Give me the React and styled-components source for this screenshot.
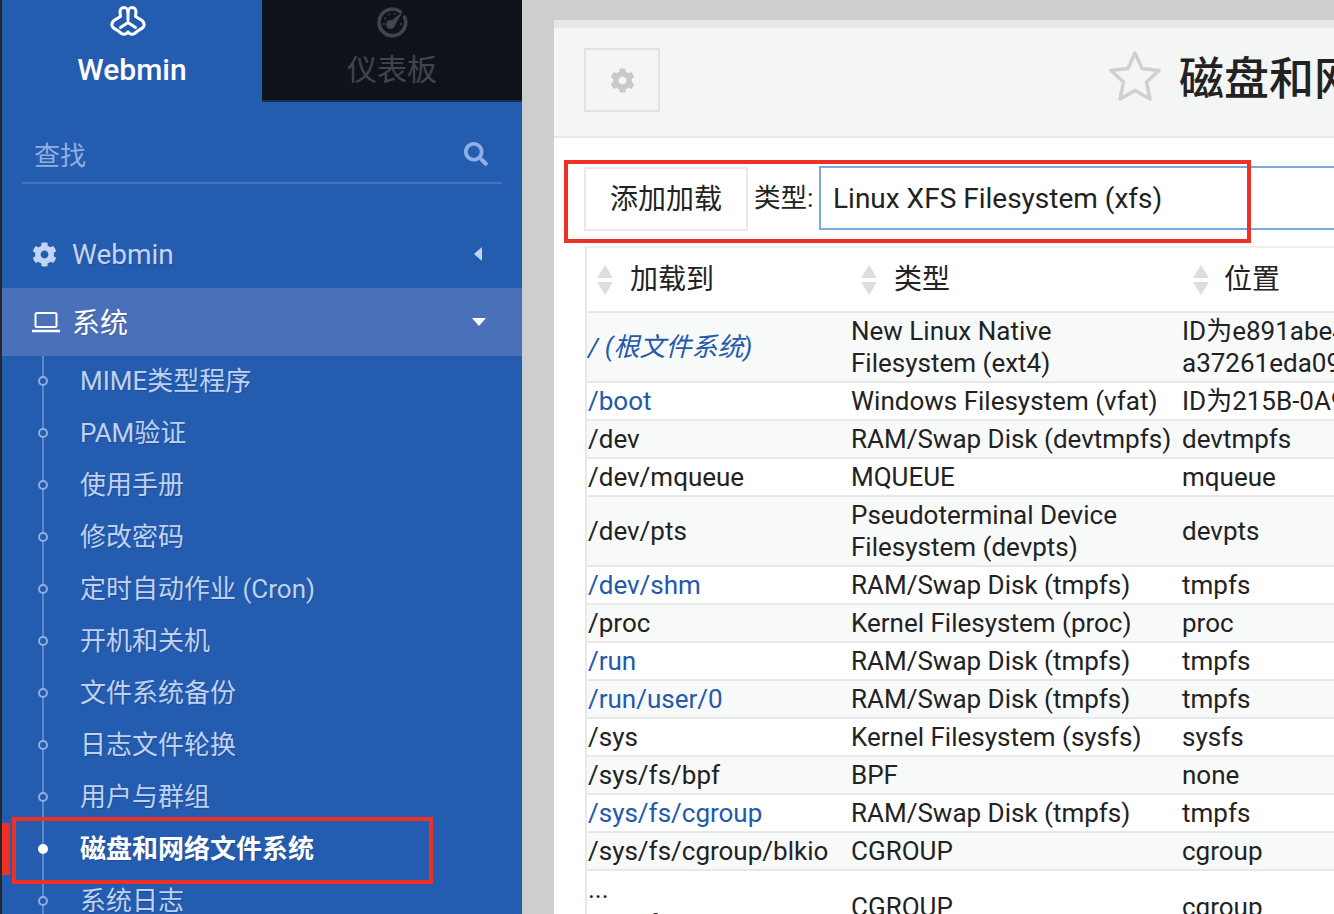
import React from "react";
import styled, { createGlobalStyle } from "styled-components";
import { FaCog, FaSearch } from "react-icons/fa";

const FONT = `Roboto, "Noto Sans CJK SC", sans-serif`;

const Global = createGlobalStyle`
  html, body { margin: 0; padding: 0; height: 100%; overflow: hidden; background: #cdcfcf; }
  #root { height: 100%; }
  * { box-sizing: border-box; }
`;

const Page = styled.div`
  display: flex;
  width: 1334px;
  height: 914px;
  overflow: hidden;
  font-family: ${FONT};
  color: #222;
`;

/* ---------- sidebar ---------- */
const Sidebar = styled.aside`
  flex: 0 0 522px;
  height: 100%;
  background: #245cb0;
  border-left: 2px solid #26282c;
  overflow: hidden;
`;
const Tabs = styled.div`
  display: flex;
  height: 102px;
`;
const BrandTab = styled.div`
  flex: 0 0 260px;
  display: flex;
  flex-direction: column;
  align-items: center;
  padding-top: 5px;
  color: #fff;
  font-size: 30px;
  font-weight: 500;
  line-height: 36px;
  svg { margin: 0 8px 14px 0; }
`;
const DashTab = styled.div`
  flex: 1;
  display: flex;
  flex-direction: column;
  align-items: center;
  padding-top: 6px;
  background: #0e131b;
  border-bottom: 2px solid #1b2f52;
  color: #40444b;
  font-size: 30px;
  line-height: 38px;
  svg { margin-bottom: 13px; }
`;
const Search = styled.div`
  display: flex;
  align-items: center;
  justify-content: space-between;
  height: 56px;
  margin: 26px 20px 0;
  padding: 0 14px 4px 12px;
  border-bottom: 2px solid #4473bb;
  color: #8fafe0;
  font-size: 26px;
  svg { margin-top: 1px; }
`;
const Nav = styled.nav`
  margin-top: 36px;
`;
const NavRow = styled.div`
  display: flex;
  align-items: center;
  height: 68px;
  padding: 0 36px 0 30px;
  font-size: 28px;
  color: ${(p) => (p.$open ? "#fff" : "#c3d4f5")};
  background: ${(p) => (p.$open ? "#4a70ba" : "transparent")};
  text-shadow: 1px 1px 1px rgba(0, 0, 0, 0.15);
`;
const NavIcon = styled.span`
  display: flex;
  width: 41px;
  margin-right: -1px;
  flex: none;
`;
const NavLabel = styled.span`
  flex: 1;
  margin-top: ${(p) => (p.$open ? "-2px" : "0")};
`;
const CaretLeft = styled.span`
  width: 0;
  height: 0;
  margin-right: 4px;
  border-top: 7px solid transparent;
  border-bottom: 7px solid transparent;
  border-right: 8px solid #c3d4f5;
`;
const CaretDown = styled.span`
  width: 0;
  height: 0;
  border-left: 7px solid transparent;
  border-right: 7px solid transparent;
  border-top: 8px solid #fff;
`;
const SubList = styled.ul`
  position: relative;
  list-style: none;
  margin: -1px 0 0;
  padding: 0;
  &::before {
    content: "";
    position: absolute;
    left: 40px;
    top: 1px;
    bottom: 0;
    width: 2px;
    background: #5f86c8;
  }
`;
const SubItem = styled.li`
  position: relative;
  display: flex;
  align-items: center;
  height: 52px;
  padding: 0 0 5px 78px;
  font-size: 26px;
  font-weight: ${(p) => (p.$active ? 700 : 400)};
  color: ${(p) => (p.$active ? "#fff" : "#bfd1f3")};
  text-shadow: 1px 1px 1px rgba(0, 0, 0, 0.15);
  white-space: nowrap;
`;
const Dot = styled.span`
  position: absolute;
  left: 36px;
  top: 21px;
  width: 10px;
  height: 10px;
  border-radius: 50%;
  border: 2px solid ${(p) => (p.$active ? "#fff" : "#8fafe0")};
  background: ${(p) => (p.$active ? "#fff" : "#245cb0")};
`;
const ActiveBar = styled.span`
  position: absolute;
  left: 0;
  top: 0;
  width: 8px;
  height: 52px;
  background: #ee3124;
`;
const SideFrame = styled.span`
  position: absolute;
  left: 10px;
  top: -6px;
  width: 421px;
  height: 67px;
  border: 4px solid #ee3124;
`;

/* ---------- main ---------- */
const Main = styled.main`
  flex: 1;
  min-width: 0;
  padding: 20px 0 0 32px;
  background: #cdcfcf;
`;
const Panel = styled.section`
  width: 900px;
  height: 900px;
  background: #fff;
  overflow: hidden;
`;
const PanelTop = styled.header`
  display: flex;
  align-items: center;
  height: 118px;
  padding: 0 0 4px 30px;
  background: #f4f6f6;
  border-top: 8px solid #e6e8e8;
  border-bottom: 2px solid #e6e8e8;
`;
const GearButton = styled.div`
  display: flex;
  align-items: center;
  justify-content: center;
  flex: none;
  width: 76px;
  height: 64px;
  border: 2px solid #e2e4e4;
  color: #c8c9c9;
`;
const Title = styled.h1`
  display: flex;
  align-items: center;
  flex: none;
  margin: 0 0 0 449px;
  font-size: 45px;
  font-weight: 500;
  line-height: 60px;
  white-space: nowrap;
  color: #222;
  svg { margin: -8px 18px 0 0; }
`;
const Toolbar = styled.div`
  position: relative;
  display: flex;
  align-items: center;
  height: 64px;
  margin: 28px 0 0 30px;
`;
const AddButton = styled.div`
  display: flex;
  align-items: center;
  justify-content: center;
  flex: none;
  width: 164px;
  height: 64px;
  margin-top: 2px;
  padding-bottom: 4px;
  border: 2px solid #e8e8e8;
  font-size: 28px;
`;
const FieldLabel = styled.span`
  flex: none;
  width: 65px;
  margin-left: 6px;
  font-size: 26.5px;
  line-height: 60px;
`;
const SelectBox = styled.div`
  display: flex;
  align-items: center;
  flex: none;
  width: 700px;
  height: 64px;
  padding-left: 12px;
  border: 2px solid #76abe2;
  font-size: 28px;
`;
const ToolFrame = styled.span`
  position: absolute;
  left: -20px;
  top: -6px;
  width: 687px;
  height: 83px;
  border: 4px solid #ee3124;
`;
const Grid = styled.table`
  table-layout: fixed;
  width: 800px;
  margin: 16px 0 0 31px;
  border-collapse: separate;
  border-spacing: 0;
  border-left: 2px solid #e8e8e8;
  border-top: 2px solid #f0f0f0;
`;
const HeadCell = styled.th`
  width: ${(p) => p.$w}px;
  height: 65px;
  padding: 0 0 0 ${(p) => p.$pad}px;
  border-bottom: 2px solid #e8e8e8;
  text-align: left;
  font-size: 28px;
  font-weight: 400;
`;
const HeadInner = styled.span`
  display: flex;
  align-items: center;
  gap: ${(p) => p.$gap}px;
`;
const HeadText = styled.span`
  margin-top: -6px;
`;
const Body = styled.tbody`
  tr:nth-child(odd) td { background: #f8fafa; }
`;
const Cell = styled.td`
  padding: 2px 3px 2px 4px;
  border-bottom: 2px solid #e8e8e8;
  font-size: 26px;
  line-height: 32px;
  vertical-align: middle;
  overflow: hidden;
  white-space: ${(p) => (p.$pre ? "pre" : "normal")};
  &:first-child { padding-left: 1px; }
`;
const CellText = styled.span`
  display: block;
  margin-left: -1px;
`;
const PathLink = styled.span`
  color: #2259aa;
  font-style: ${(p) => (p.$italic ? "italic" : "normal")};
`;
const PathTail = styled.span`
  display: block;
  margin-top: 3px;
`;

const LogoMark = () => (
  <svg width="36" height="33" viewBox="0 0 36 33" fill="none" stroke="#fff" strokeWidth="3" strokeLinejoin="round" strokeLinecap="round">
    <path d="M14 2.5C11.5 2.5 10 4.5 10 7L10.5 11.5L5.5 14.5C3 16 1.5 18 2 20.5C2.5 23 4.5 24 7 25L11.5 28.5C14 30 16 29.5 18 27C20 29.5 22 30 24.500 28.5L29 25C31.500 24 33.500 23 34 20.500C34.500 18 33 16 30.500 14.500L25.500 11.500L26 7C26 4.500 24.500 2.500 22 2.500C20 2.500 18 4.500 18 7C18 4.500 16 2.500 14 2.500Z" />
    <path d="M18 7V15M10.500 22.500L18 17.500L25.500 22.500" />
  </svg>
);

const GaugeMark = () => (
  <svg width="32" height="32" viewBox="0 0 32 32" fill="none">
    <path d="M24 5.400A13.300 13.300 0 1 0 28.600 11" stroke="#40444b" strokeWidth="3.600" strokeLinecap="round" />
    <path d="M13 16.500L27 5.500L18.500 20Z" fill="#40444b" />
    <circle cx="14.500" cy="18.500" r="4.500" fill="#40444b" />
    <g fill="#40444b">
      <circle cx="8" cy="18" r="1" />
      <circle cx="9" cy="12.500" r="1" />
      <circle cx="13" cy="8.500" r="1" />
      <circle cx="18.500" cy="8" r="1" />
      <circle cx="25" cy="18" r="1" />
    </g>
  </svg>
);

const LaptopMark = () => (
  <svg width="28" height="22" viewBox="0 0 28 22" fill="none" stroke="#fff" strokeWidth="2">
    <rect x="3.500" y="2" width="21" height="14" rx="1.500" />
    <path d="M0 20H28" strokeWidth="2.500" />
  </svg>
);

const StarMark = () => (
  <svg width="52" height="52" viewBox="0 0 52 52" fill="none" stroke="#cfd0d0" strokeWidth="3.500" strokeLinejoin="round">
    <path d="M26 3L33 18.500L50 20.500L37.500 32L41 49L26 40.500L11 49L14.500 32L2 20.500L19 18.500Z" />
  </svg>
);

const SortArrows = () => (
  <svg width="16" height="30" viewBox="0 0 16 30" fill="#dddede">
    <path d="M8 0L16 13H0Z" />
    <path d="M0 17H16L8 30Z" />
  </svg>
);

const subItems = [
  "MIME类型程序",
  "PAM验证",
  "使用手册",
  "修改密码",
  "定时自动作业 (Cron)",
  "开机和关机",
  "文件系统备份",
  "日志文件轮换",
  "用户与群组",
  "磁盘和网络文件系统",
  "系统日志",
];

const rows = [
  { path: "/ (根文件系统)", link: true, italic: true, type: "New Linux Native Filesystem (ext4)", loc: "ID为e891abe4-\na37261eda09" },
  { path: "/boot", link: true, type: "Windows Filesystem (vfat)", loc: "ID为215B-0A9" },
  { path: "/dev", type: "RAM/Swap Disk (devtmpfs)", loc: "devtmpfs" },
  { path: "/dev/mqueue", type: "MQUEUE", loc: "mqueue" },
  { path: "/dev/pts", type: "Pseudoterminal Device Filesystem (devpts)", loc: "devpts" },
  { path: "/dev/shm", link: true, type: "RAM/Swap Disk (tmpfs)", loc: "tmpfs" },
  { path: "/proc", type: "Kernel Filesystem (proc)", loc: "proc" },
  { path: "/run", link: true, type: "RAM/Swap Disk (tmpfs)", loc: "tmpfs" },
  { path: "/run/user/0", link: true, type: "RAM/Swap Disk (tmpfs)", loc: "tmpfs" },
  { path: "/sys", type: "Kernel Filesystem (sysfs)", loc: "sysfs" },
  { path: "/sys/fs/bpf", type: "BPF", loc: "none" },
  { path: "/sys/fs/cgroup", link: true, type: "RAM/Swap Disk (tmpfs)", loc: "tmpfs" },
  { path: "/sys/fs/cgroup/blkio", type: "CGROUP", loc: "cgroup" },
  { path: "...", tail: "/sys/fs/cgroup/cpu,cpuacct", type: "CGROUP", loc: "cgroup" },
];

export default function App() {
  return (
    <Page>
      <Global />
      <Sidebar>
        <Tabs>
          <BrandTab>
            <LogoMark />
            Webmin
          </BrandTab>
          <DashTab>
            <GaugeMark />
            仪表板
          </DashTab>
        </Tabs>
        <Search>
          查找
          <FaSearch size={24} color="#8fafe0" />
        </Search>
        <Nav>
          <NavRow>
            <NavIcon>
              <FaCog size={25} />
            </NavIcon>
            <NavLabel>Webmin</NavLabel>
            <CaretLeft />
          </NavRow>
          <NavRow $open>
            <NavIcon>
              <LaptopMark />
            </NavIcon>
            <NavLabel $open>系统</NavLabel>
            <CaretDown />
          </NavRow>
          <SubList>
            {subItems.map((label) => {
              const active = label === "磁盘和网络文件系统";
              return (
                <SubItem key={label} $active={active}>
                  {active && <ActiveBar />}
                  {active && <SideFrame />}
                  <Dot $active={active} />
                  {label}
                </SubItem>
              );
            })}
          </SubList>
        </Nav>
      </Sidebar>
      <Main>
        <Panel>
          <PanelTop>
            <GearButton>
              <FaCog size={25} />
            </GearButton>
            <Title>
              <StarMark />
              磁盘和网络文件系统
            </Title>
          </PanelTop>
          <Toolbar>
            <AddButton>添加加载</AddButton>
            <FieldLabel>类型:</FieldLabel>
            <SelectBox>Linux XFS Filesystem (xfs)</SelectBox>
            <ToolFrame />
          </Toolbar>
          <Grid>
            <thead>
              <tr>
                <HeadCell $w={261} $pad={10}>
                  <HeadInner $gap={17}>
                    <SortArrows />
                    <HeadText>加载到</HeadText>
                  </HeadInner>
                </HeadCell>
                <HeadCell $w={331} $pad={13}>
                  <HeadInner $gap={17}>
                    <SortArrows />
                    <HeadText>类型</HeadText>
                  </HeadInner>
                </HeadCell>
                <HeadCell $w={208} $pad={14}>
                  <HeadInner $gap={15}>
                    <SortArrows />
                    <HeadText>位置</HeadText>
                  </HeadInner>
                </HeadCell>
              </tr>
            </thead>
            <Body>
              {rows.map((r) => (
                <tr key={r.path}>
                  <Cell>
                    {r.link ? <PathLink $italic={r.italic}>{r.path}</PathLink> : r.path}
                    {r.tail && <PathTail>{r.tail}</PathTail>}
                  </Cell>
                  <Cell>
                    <CellText>{r.type}</CellText>
                  </Cell>
                  <Cell $pre>
                    <CellText>{r.loc}</CellText>
                  </Cell>
                </tr>
              ))}
            </Body>
          </Grid>
        </Panel>
      </Main>
    </Page>
  );
}
